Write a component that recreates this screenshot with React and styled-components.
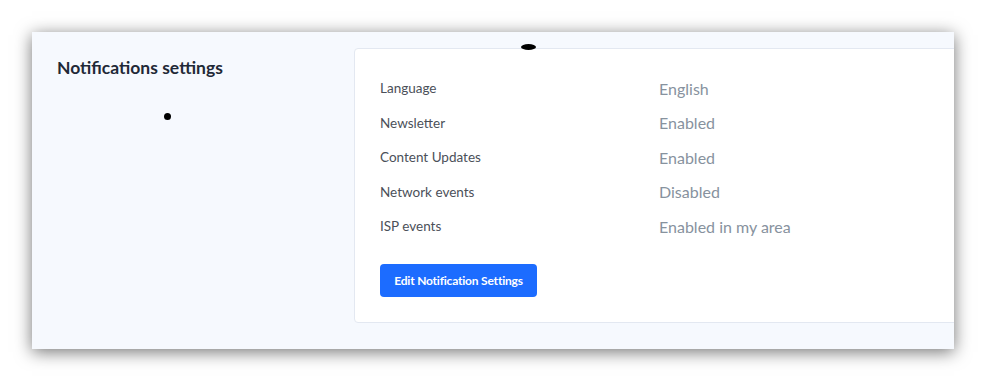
import React from 'react'
import styled, { createGlobalStyle } from 'styled-components'

const GlobalStyle = createGlobalStyle`
  html, body {
    margin: 0;
    padding: 0;
    background: #ffffff;
  }
  body {
    font-family: Lato, "Open Sans", sans-serif;
  }
`

const settings = [
  { label: 'Language', value: 'English' },
  { label: 'Newsletter', value: 'Enabled' },
  { label: 'Content Updates', value: 'Enabled' },
  { label: 'Network events', value: 'Disabled' },
  { label: 'ISP events', value: 'Enabled in my area' },
]

export default function App() {
  return (
    <>
      <GlobalStyle />
      <Page>
        <Frame>
          <Side>
            <Title>Notifications settings</Title>
          </Side>
          <Card>
            <List>
              {settings.map((item) => (
                <Row key={item.label}>
                  <Label>{item.label}</Label>
                  <Value>{item.value}</Value>
                </Row>
              ))}
            </List>
            <EditBtn>Edit Notification Settings</EditBtn>
          </Card>
          <Mark $x={132} $y={81} $w={7} $h={7} />
          <Mark $x={489} $y={12} $w={15} $h={6} />
        </Frame>
      </Page>
    </>
  )
}

const Page = styled.div`
  padding: 32px;
`

const Frame = styled.div`
  position: relative;
  width: 922px;
  height: 317px;
  box-sizing: border-box;
  background: #f6f9fe;
  box-shadow: 0 3px 16px rgba(0, 0, 0, 0.55);
  overflow: hidden;
  display: grid;
  grid-template-columns: 322px 1fr;
  padding-top: 16px;
`

const Side = styled.div`
  padding: 9px 0 0 25px;
`

const Title = styled.h2`
  margin: 0;
  font-size: 17.5px;
  font-weight: 700;
  color: #1f2937;
`

const Card = styled.div`
  align-self: start;
  height: 275px;
  box-sizing: border-box;
  margin-right: -20px;
  background: #ffffff;
  border: 1px solid #e3e8f1;
  border-radius: 4px;
  padding: 22px 25px 26px;
`

const List = styled.ul`
  list-style: none;
  margin: 0;
  padding: 0;
`

const Row = styled.li`
  display: grid;
  grid-template-columns: 279px 1fr;
  align-items: center;
  height: 34.5px;
`

const Label = styled.span`
  font-size: 13.5px;
  color: #4b5059;
`

const Value = styled.span`
  font-size: 16px;
  color: #87929e;
`

const EditBtn = styled.button`
  margin-top: 20px;
  width: 157px;
  height: 33px;
  border: none;
  border-radius: 4px;
  background-color: #1c6cff;
  color: #fff;
  font-family: Lato, sans-serif;
  font-size: 12px;
  font-weight: 700;
  letter-spacing: -0.2px;
  cursor: pointer;
`

const Mark = styled.span`
  position: absolute;
  left: ${(p) => p.$x}px;
  top: ${(p) => p.$y}px;
  width: ${(p) => p.$w}px;
  height: ${(p) => p.$h}px;
  border-radius: 50%;
  background: #000;
`
